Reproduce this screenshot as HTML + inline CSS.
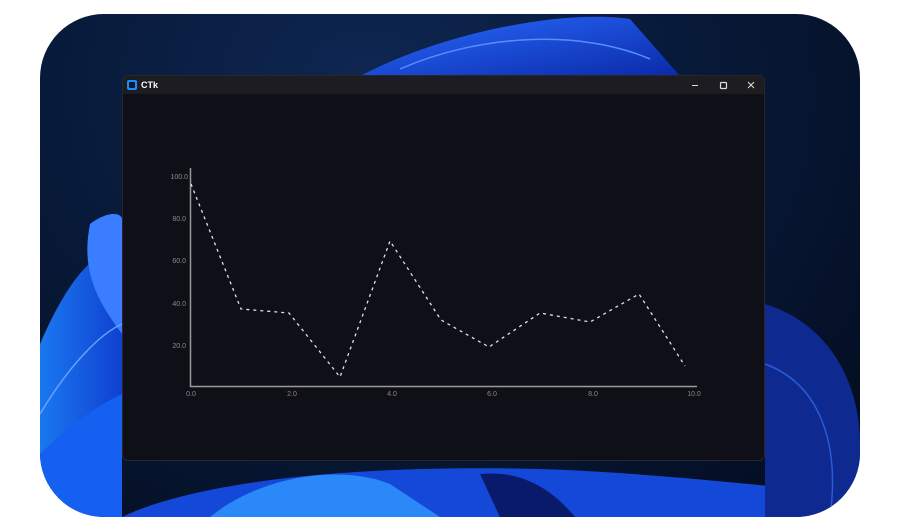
<!DOCTYPE html>
<html><head><meta charset="utf-8"><style>
html,body{margin:0;padding:0;background:#fff;width:900px;height:532px;overflow:hidden;font-family:"Liberation Sans",sans-serif}
.bg{position:absolute;left:40px;top:14px;width:820px;height:503px;border-radius:64px;overflow:hidden;background:radial-gradient(ellipse at 40% 15%,#0e2752 0%,#081a3a 45%,#030b1c 100%)}
.win{position:absolute;left:122px;top:75px;width:643px;height:386px;background:#0f0f17;border-radius:6px;border:1px solid #26262c;box-sizing:border-box;overflow:hidden}
.tb{height:18px;background:#1d1d21;position:relative}
.tb .ic{position:absolute;left:4px;top:4px;width:10px;height:10px;border-radius:2px;background:#1a8cff}
.tb .ic i{position:absolute;left:2px;top:2px;width:6px;height:6px;background:#0b1a30;border-radius:1px}
.tb .t{position:absolute;left:18px;top:4px;font-size:9px;color:#fff;font-weight:bold}
</style></head><body>
<div class="bg">
<svg width="820" height="503" style="position:absolute;left:0;top:0">
<defs>
<linearGradient id="g1" x1="0" y1="0" x2="1" y2="1"><stop offset="0" stop-color="#2a6bff"/><stop offset="1" stop-color="#0a2aa8"/></linearGradient>
<linearGradient id="g2" x1="0" y1="0" x2="1" y2="0"><stop offset="0" stop-color="#1a78f0"/><stop offset="1" stop-color="#1040d0"/></linearGradient>
</defs>
<path d="M320 62 C400 20 520 -5 590 5 L640 62 Z" fill="url(#g1)"/>
<path d="M360 55 C440 20 540 15 610 45" stroke="#5a8cff" stroke-width="1.5" fill="none"/>
<path d="M0 330 C30 260 60 230 82 240 L82 470 L0 503 Z" fill="url(#g2)"/>
<path d="M50 210 C70 195 82 200 82 205 L82 320 C60 290 40 260 50 210 Z" fill="#3a7dff"/>
<path d="M0 400 C30 350 60 320 82 310" stroke="#6aa0ff" stroke-width="1.5" fill="none"/>
<path d="M0 440 C30 410 60 390 82 380 L82 503 L0 503 Z" fill="#1560f0"/>
<path d="M82 503 C150 470 300 450 500 455 C600 458 700 470 820 480 L820 503 Z" fill="#1448d8"/>
<path d="M170 503 C220 462 300 450 350 470 L400 503 Z" fill="#2a88f8"/>
<path d="M440 460 C490 455 520 485 535 503 L460 503 Z" fill="#0a1a6a"/>
<path d="M725 290 C790 310 820 370 820 430 L820 503 L725 503 Z" fill="#0e2a90"/>
<path d="M725 350 C780 370 800 430 790 503" stroke="#2a5ad8" stroke-width="1.5" fill="none"/>
</svg>
</div>
<div class="win">
<div class="tb"><div class="ic"><i></i></div><div class="t">CTk</div>
<svg width="643" height="18" style="position:absolute;left:0;top:0">
<line x1="569" y1="9.5" x2="575" y2="9.5" stroke="#ddd" stroke-width="1"/>
<rect x="597.5" y="6.5" width="6" height="6" rx="1" fill="none" stroke="#ddd" stroke-width="1.2"/>
<path d="M625 6 L631 12 M631 6 L625 12" stroke="#ddd" stroke-width="1"/>
</svg></div>
</div>
<svg width="900" height="532" style="position:absolute;left:0;top:0">
<g font-family="Liberation Sans" font-size="7" fill="#8a8a8a" text-anchor="end">
<text x="188" y="179">100.0</text><text x="186" y="221">80.0</text><text x="186" y="263">60.0</text><text x="186" y="306">40.0</text><text x="186" y="348">20.0</text>
</g>
<g font-family="Liberation Sans" font-size="7" fill="#8a8a8a" text-anchor="middle">
<text x="191" y="396">0.0</text><text x="292" y="396">2.0</text><text x="392" y="396">4.0</text><text x="492" y="396">6.0</text><text x="593" y="396">8.0</text><text x="694" y="396">10.0</text>
</g>
<line x1="190.5" y1="168" x2="190.5" y2="387" stroke="#999" stroke-width="1.5"/>
<line x1="190" y1="386.5" x2="697" y2="386.5" stroke="#999" stroke-width="1.5"/>
<polyline points="191,184 241,309 289,313 340,377 390,241 441,320 489,347 540,313 590,322 639,294 685,366" fill="none" stroke="#cfe8f0" stroke-width="1.3" stroke-dasharray="3,4"/>
</svg>
</body></html>
